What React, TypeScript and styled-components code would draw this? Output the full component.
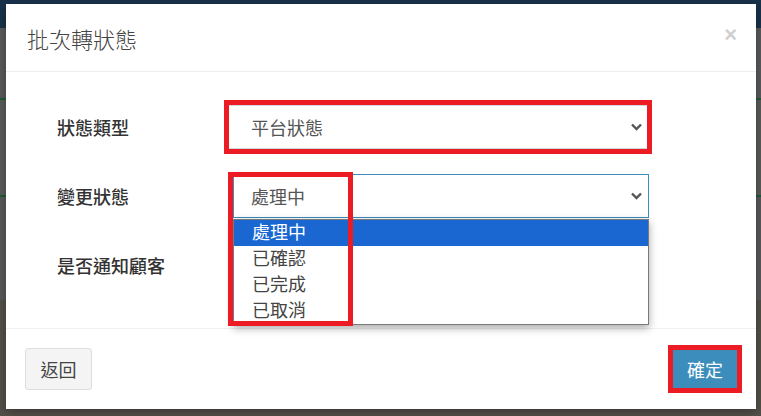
import React from 'react';
import styled, { createGlobalStyle } from 'styled-components';

const GlobalStyle = createGlobalStyle`
  html, body {
    margin: 0;
    padding: 0;
  }
  body {
    width: 761px;
    height: 416px;
    overflow: hidden;
    font-family: 'Liberation Sans', 'Noto Sans CJK TC', sans-serif;
    background: linear-gradient(
      to bottom,
      #18324a 0,
      #18324a 28px,
      #58595a 28px,
      #58595a 98px,
      #1f5a36 98px,
      #1f5a36 100px,
      #595b59 100px,
      #595b59 195px,
      #1f5a36 195px,
      #1f5a36 197px,
      #58585a 197px,
      #58585a 300px,
      #534f49 300px
    );
  }
`;

const Page = styled.div`
  padding: 4px 5px 0 6px;
`;

const Modal = styled.div`
  width: 750px;
  height: 405px;
  background: #fff;
  display: flex;
  flex-direction: column;
  box-shadow: 0 3px 9px rgba(0, 0, 0, 0.3);
`;

const Header = styled.div`
  height: 68px;
  box-sizing: border-box;
  border-bottom: 1px solid #eeeeee;
  display: flex;
  align-items: center;
  justify-content: space-between;
  padding: 0 19px 6px 21px;
`;

const Title = styled.div`
  font-size: 22px;
  color: #444;
  font-weight: 300;
  margin-top: 6px;
`;

const Close = styled.div`
  font-size: 22px;
  font-weight: bold;
  color: #cfcfcf;
  line-height: 1;
`;

const Body = styled.div`
  flex: 1;
  padding: 33px 0 0 51px;
  display: flex;
  flex-direction: column;
  gap: 25px;
`;

const Row = styled.div`
  display: flex;
  align-items: center;
  height: 44px;
`;

const Label = styled.div`
  width: 172px;
  font-size: 18px;
  font-weight: 500;
  color: #333;
`;

const Field = styled.div<{ $inset?: number }>`
  position: relative;
  margin-left: ${(p) => p.$inset || 0}px;
`;

const SelectBox = styled.div<{ $focused?: boolean; $width: number; $marked?: boolean }>`
  box-sizing: border-box;
  width: ${(p) => p.$width}px;
  height: 44px;
  display: flex;
  align-items: center;
  justify-content: space-between;
  padding: 0 ${(p) => (p.$focused ? 6 : 5)}px 0 ${(p) => (p.$focused ? 17 : 22)}px;
  font-size: 18px;
  color: #555;
  border: 1px solid ${(p) => (p.$focused ? '#3c8dbc' : '#d2d6de')};
  ${(p) => (p.$marked ? 'border-left: none; border-right: none; outline: 5px solid #ed1c24;' : '')}
  background: #fff;
`;

const Chevron = () => (
  <svg width="11" height="8" viewBox="0 0 11 8">
    <path d="M1 1.5l4.5 4.5L10 1.5" fill="none" stroke="#555" strokeWidth="2.4" />
  </svg>
);

const Dropdown = styled.div`
  position: absolute;
  top: 45px;
  left: 0;
  width: 416px;
  box-sizing: border-box;
  border: 1px solid #7a7a7a;
  background: #fff;
  box-shadow: 0 3px 8px rgba(0, 0, 0, 0.35);
  z-index: 2;
`;

const Option = styled.div<{ $active?: boolean }>`
  height: 26px;
  line-height: 26px;
  padding-left: 18px;
  font-size: 18px;
  color: ${(p) => (p.$active ? '#fff' : '#444')};
  background: ${(p) => (p.$active ? '#1a67d2' : 'transparent')};
`;

const RedMark = styled.div`
  position: absolute;
  left: -5px;
  top: -2px;
  width: 125px;
  height: 154px;
  box-sizing: border-box;
  border: 5px solid #ed1c24;
  z-index: 3;
  pointer-events: none;
`;

const Footer = styled.div`
  height: 81px;
  box-sizing: border-box;
  border-top: 1px solid #f0f0f0;
  display: flex;
  align-items: center;
  justify-content: space-between;
  padding: 0 19px;
`;

const Button = styled.button<{ $primary?: boolean }>`
  font-family: inherit;
  font-size: 18px;
  border-radius: 3px;
  cursor: pointer;
  padding: 0;
  width: ${(p) => (p.$primary ? 64 : 67)}px;
  height: ${(p) => (p.$primary ? 38 : 42)}px;
  color: ${(p) => (p.$primary ? '#fff' : '#444')};
  background: ${(p) => (p.$primary ? '#3c8dbc' : '#f4f4f4')};
  border: ${(p) => (p.$primary ? 'none' : '1px solid #ddd')};
  ${(p) => (p.$primary ? 'border-radius: 0; outline: 5px solid #ed1c24;' : '')}
`;

const options = ['處理中', '已確認', '已完成', '已取消'];

export default function App() {
  return (
    <Page>
      <GlobalStyle />
      <Modal>
        <Header>
          <Title>批次轉狀態</Title>
          <Close>×</Close>
        </Header>
        <Body>
          <Row>
            <Label>狀態類型</Label>
            <Field>
              <SelectBox $width={418} $marked>
                平台狀態
                <Chevron />
              </SelectBox>
            </Field>
          </Row>
          <Row>
            <Label>變更狀態</Label>
            <Field $inset={4}>
              <SelectBox $width={416} $focused>
                處理中
                <Chevron />
              </SelectBox>
              <Dropdown>
                {options.map((o, i) => (
                  <Option key={o} $active={i === 0}>
                    {o}
                  </Option>
                ))}
              </Dropdown>
              <RedMark />
            </Field>
          </Row>
          <Row>
            <Label>是否通知顧客</Label>
          </Row>
        </Body>
        <Footer>
          <Button>返回</Button>
          <Button $primary>確定</Button>
        </Footer>
      </Modal>
    </Page>
  );
}
